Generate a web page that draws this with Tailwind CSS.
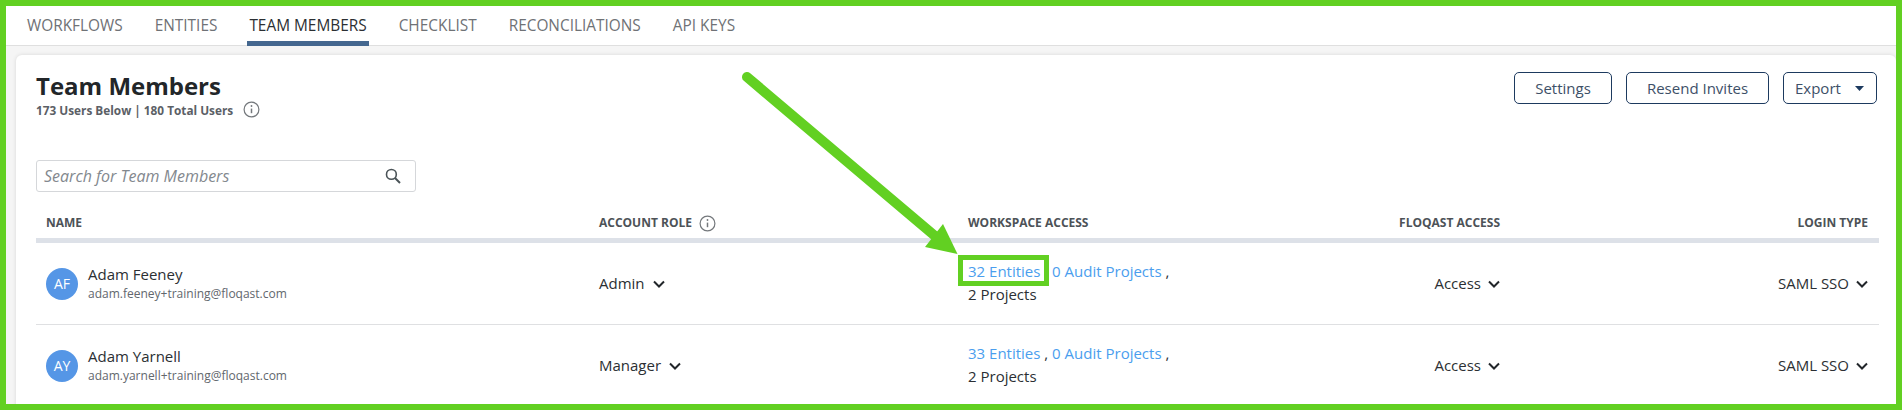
<!doctype html>
<html lang="en">
<head>
  <meta charset="UTF-8" />
  <meta name="viewport" content="width=device-width, initial-scale=1.0" />
  <script src="https://cdn.jsdelivr.net/npm/@tailwindcss/browser@4"></script>
  <title>Team Members</title>
</head>
<body class="font-['Open_Sans',sans-serif] bg-[#62d022]">
  <div class="relative h-[410px] border-[6px] border-[#62d022] bg-[#f5f5f5] overflow-hidden">
    <!-- tabs -->
    <nav class="h-[40px] bg-white border-b border-[#dfdfdf] flex gap-[28px] pl-[19px] text-[15.4px] leading-[20px] font-medium text-[#6f7276]">
      <a class="px-[2px] pt-[10px]">WORKFLOWS</a>
      <a class="px-[2px] pt-[10px]">ENTITIES</a>
      <a class="px-[2px] pt-[10px] h-[40px] border-b-[5px] border-[#44678f] text-[#2b2f33]">TEAM MEMBERS</a>
      <a class="px-[2px] pt-[10px]">CHECKLIST</a>
      <a class="px-[2px] pt-[10px]">RECONCILIATIONS</a>
      <a class="px-[2px] pt-[10px]">API KEYS</a>
    </nav>

    <!-- card -->
    <section class="mt-[9px] ml-[10px] bg-white rounded-t-md shadow-[0_0_4px_rgba(0,0,0,0.12)] pl-[20px] pr-[17px] pt-[17px] h-[400px]">
      <div class="flex justify-between items-start h-[88px]">
        <div>
          <h1 class="text-2xl leading-[30px] font-bold text-[#222629] -mt-[1px]">Team Members</h1>
          <p class="flex items-center gap-[10px] text-[11.8px] leading-[16px] font-bold text-[#5b6066]">
            173 Users Below | 180 Total Users
            <svg class="w-[17px] h-[17px]" viewBox="0 0 17 17" fill="none" stroke="#74787c" stroke-width="1.2"><circle cx="8.5" cy="8.5" r="7.4"/><path d="M8.5 7.6v4.6" stroke-width="1.5"/><circle cx="8.5" cy="5" r="0.9" fill="#74787c" stroke="none"/></svg>
          </p>
        </div>
        <div class="flex gap-[14px] text-[15px] text-[#3d5068] mr-[2px]">
          <button class="w-[98px] h-[32px] border border-[#1d3a5f] rounded-[5px]">Settings</button>
          <button class="w-[143px] h-[32px] border border-[#1d3a5f] rounded-[5px]">Resend Invites</button>
          <button class="w-[94px] h-[32px] border border-[#1d3a5f] rounded-[5px] flex items-center pl-[11px] gap-[14px]">
            Export
            <svg class="w-[9px] h-[5px]" viewBox="0 0 9 5" fill="#1d3a5f"><path d="M0 0h9L4.5 5z"/></svg>
          </button>
        </div>
      </div>

      <div class="w-[380px] h-[32px] border border-[#d5d7da] rounded-[3px] flex items-center justify-between pl-[7px] pr-[14px]">
        <span class="text-base italic text-[#83888e]">Search for Team Members</span>
        <svg class="w-[16px] h-[16px]" viewBox="0 0 16 16" fill="none" stroke="#4a5357" stroke-width="1.6"><circle cx="6.4" cy="6.4" r="4.9"/><path d="M10 10l5 5" stroke-width="2"/></svg>
      </div>

      <!-- table -->
      <div>
        <div class="grid grid-cols-[553px_369px_332px_200px_1fr] pl-[10px] pr-[11px] h-[51px] pt-[23px] border-b-[5px] border-[#dde1e8] text-xs leading-[16px] font-bold text-[#4d5257]">
          <div>NAME</div>
          <div class="flex items-center gap-[7px] h-[16px]">
            ACCOUNT ROLE
            <svg class="w-[17px] h-[17px]" viewBox="0 0 17 17" fill="none" stroke="#74787c" stroke-width="1.2"><circle cx="8.5" cy="8.5" r="7.4"/><path d="M8.5 7.6v4.6" stroke-width="1.5"/><circle cx="8.5" cy="5" r="0.9" fill="#74787c" stroke="none"/></svg>
          </div>
          <div>WORKSPACE ACCESS</div>
          <div class="text-right">FLOQAST ACCESS</div>
          <div class="text-right">LOGIN TYPE</div>
        </div>

        <div class="grid grid-cols-[553px_369px_332px_200px_1fr] items-center pl-[10px] pr-[11px] h-[82px] border-b border-[#dfe0e2] text-[15px] text-[#2b2f33]">
          <div class="flex items-center gap-[10px]">
            <span class="w-[32px] h-[32px] rounded-full bg-[#5596e6] text-white text-sm flex items-center justify-center">AF</span>
            <div>
              <div class="leading-[20px]">Adam Feeney</div>
              <div class="text-xs leading-[20px] text-[#62676d]">adam.feeney+training@floqast.com</div>
            </div>
          </div>
          <div class="flex items-center gap-[8px]">Admin
            <svg class="w-[12px] h-[8px]" viewBox="0 0 12 8" fill="none" stroke="#22262a" stroke-width="2"><path d="M1 1.5l5 5 5-5"/></svg>
          </div>
          <div class="leading-[23px] -mt-[2px]"><a class="text-[#4a9eee]">32 Entities</a> , <a class="text-[#4a9eee]">0 Audit Projects</a> ,<br>2 Projects</div>
          <div class="flex items-center justify-end gap-[7px]">Access
            <svg class="w-[12px] h-[8px]" viewBox="0 0 12 8" fill="none" stroke="#22262a" stroke-width="2"><path d="M1 1.5l5 5 5-5"/></svg>
          </div>
          <div class="flex items-center justify-end gap-[7px]">SAML SSO
            <svg class="w-[12px] h-[8px]" viewBox="0 0 12 8" fill="none" stroke="#22262a" stroke-width="2"><path d="M1 1.5l5 5 5-5"/></svg>
          </div>
        </div>

        <div class="grid grid-cols-[553px_369px_332px_200px_1fr] items-center pl-[10px] pr-[11px] h-[81px] text-[15px] text-[#2b2f33]">
          <div class="flex items-center gap-[10px]">
            <span class="w-[32px] h-[32px] rounded-full bg-[#5596e6] text-white text-sm flex items-center justify-center">AY</span>
            <div>
              <div class="leading-[20px]">Adam Yarnell</div>
              <div class="text-xs leading-[20px] text-[#62676d]">adam.yarnell+training@floqast.com</div>
            </div>
          </div>
          <div class="flex items-center gap-[8px]">Manager
            <svg class="w-[12px] h-[8px]" viewBox="0 0 12 8" fill="none" stroke="#22262a" stroke-width="2"><path d="M1 1.5l5 5 5-5"/></svg>
          </div>
          <div class="leading-[23px] -mt-[2px]"><a class="text-[#4a9eee]">33 Entities</a> , <a class="text-[#4a9eee]">0 Audit Projects</a> ,<br>2 Projects</div>
          <div class="flex items-center justify-end gap-[7px]">Access
            <svg class="w-[12px] h-[8px]" viewBox="0 0 12 8" fill="none" stroke="#22262a" stroke-width="2"><path d="M1 1.5l5 5 5-5"/></svg>
          </div>
          <div class="flex items-center justify-end gap-[7px]">SAML SSO
            <svg class="w-[12px] h-[8px]" viewBox="0 0 12 8" fill="none" stroke="#22262a" stroke-width="2"><path d="M1 1.5l5 5 5-5"/></svg>
          </div>
        </div>
      </div>
    </section>

    <!-- annotation: arrow and highlight box, offsets are relative to the 6px frame -->
    <svg class="absolute left-[-6px] top-[-6px] w-[1902px] h-[410px] pointer-events-none" viewBox="0 0 1902 410" fill="none">
      <path d="M747 77L935 236" stroke="#62d022" stroke-width="10" stroke-linecap="round"/>
      <path d="M957.5 254L943 224L925 247z" fill="#62d022"/>
      <rect x="960.5" y="257.5" width="86" height="26" stroke="#62d022" stroke-width="5"/>
    </svg>
  </div>
</body>
</html>
